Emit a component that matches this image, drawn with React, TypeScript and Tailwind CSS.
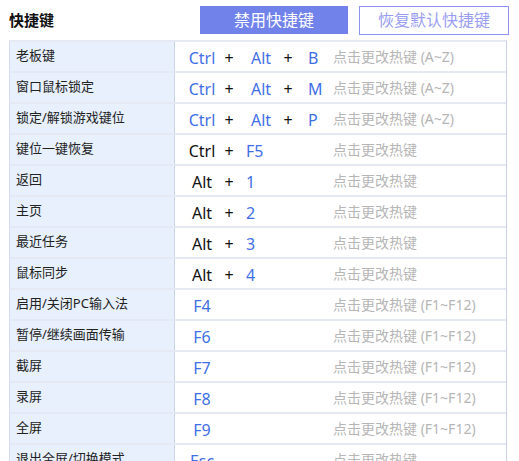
import React from 'react';

type Row = {
  label: string;
  keys: string[];
  // 哪些键显示为蓝色
  blue: boolean[];
  hint: string;
};

const rows: Row[] = [
  { label: '老板键', keys: ['Ctrl', 'Alt', 'B'], blue: [true, true, true], hint: '点击更改热键 (A~Z)' },
  { label: '窗口鼠标锁定', keys: ['Ctrl', 'Alt', 'M'], blue: [true, true, true], hint: '点击更改热键 (A~Z)' },
  { label: '锁定/解锁游戏键位', keys: ['Ctrl', 'Alt', 'P'], blue: [true, true, true], hint: '点击更改热键 (A~Z)' },
  { label: '键位一键恢复', keys: ['Ctrl', 'F5'], blue: [false, true], hint: '点击更改热键' },
  { label: '返回', keys: ['Alt', '1'], blue: [false, true], hint: '点击更改热键' },
  { label: '主页', keys: ['Alt', '2'], blue: [false, true], hint: '点击更改热键' },
  { label: '最近任务', keys: ['Alt', '3'], blue: [false, true], hint: '点击更改热键' },
  { label: '鼠标同步', keys: ['Alt', '4'], blue: [false, true], hint: '点击更改热键' },
  { label: '启用/关闭PC输入法', keys: ['F4'], blue: [true], hint: '点击更改热键 (F1~F12)' },
  { label: '暂停/继续画面传输', keys: ['F6'], blue: [true], hint: '点击更改热键 (F1~F12)' },
  { label: '截屏', keys: ['F7'], blue: [true], hint: '点击更改热键 (F1~F12)' },
  { label: '录屏', keys: ['F8'], blue: [true], hint: '点击更改热键 (F1~F12)' },
  { label: '全屏', keys: ['F9'], blue: [true], hint: '点击更改热键 (F1~F12)' },
  { label: '退出全屏/切换模式', keys: ['Esc'], blue: [true], hint: '点击更改热键' },
];

const keyColor = (blue: boolean) => (blue ? 'text-[#3f6fe6]' : 'text-[#111111]');

function Plus() {
  return <span className="w-[12px] text-center text-[#111111]">+</span>;
}

function Keys({ row }: { row: Row }) {
  const { keys, blue } = row;
  if (keys.length === 3) {
    return (
      <>
        <span className={`w-[42px] text-center ${keyColor(blue[0])}`}>{keys[0]}</span>
        <Plus />
        <span className={`ml-[4px] w-[44px] text-center ${keyColor(blue[1])}`}>{keys[1]}</span>
        <span className="w-[10px] text-center text-[#111111]">+</span>
        <span className={`pl-[15px] ${keyColor(blue[2])}`}>{keys[2]}</span>
      </>
    );
  }
  if (keys.length === 2) {
    return (
      <>
        <span className={`w-[42px] text-center ${keyColor(blue[0])}`}>{keys[0]}</span>
        <Plus />
        <span className={`pl-[11px] ${keyColor(blue[1])}`}>{keys[1]}</span>
      </>
    );
  }
  return <span className={`w-[42px] text-center ${keyColor(blue[0])}`}>{keys[0]}</span>;
}

export default function App() {
  return (
    <div
      className="w-[519px] h-[461px] overflow-hidden bg-white"
      style={{ fontFamily: '"Noto Sans", "Noto Sans CJK SC", sans-serif' }}
    >
      {/* 顶部标题与按钮 */}
      <div className="flex h-[40px] items-center pl-[9px] pr-[10px]">
        <h2 className="text-[15px] font-bold text-[#111111] leading-none">快捷键</h2>
        <div className="ml-auto flex items-center gap-[11px]">
          <button className="h-[28px] w-[148px] bg-[#7182ea] text-[16px] leading-none text-white">
            禁用快捷键
          </button>
          <button className="h-[29px] w-[150px] border border-[#8f95f0] bg-white text-[16px] leading-none text-[#9a9ef2]">
            恢复默认快捷键
          </button>
        </div>
      </div>

      {/* 快捷键列表 */}
      <div className="ml-[9px] w-[498px] border-t-2 border-r border-l border-t-[#e4e9f3] border-r-[#c8d0e8] border-l-[#d6deee]">
        {rows.map((row) => (
          <div key={row.label} className="flex h-[31px] border-b-2 border-[#e4e9f3]">
            <div className="flex w-[165px] items-center border-r border-[#cbd5ea] bg-[#e8f0fd] pl-[6px] pb-[2px] text-[13px] text-[#222222]">
              {row.label}
            </div>
            <div className="flex flex-1 items-center text-[16px] leading-none">
              <div className="flex w-[158px] items-center pl-[6px] pt-[2px]">
                <Keys row={row} />
              </div>
              <span className="text-[14px] text-[#b6b6b6]">{row.hint}</span>
            </div>
          </div>
        ))}
      </div>
    </div>
  );
}
